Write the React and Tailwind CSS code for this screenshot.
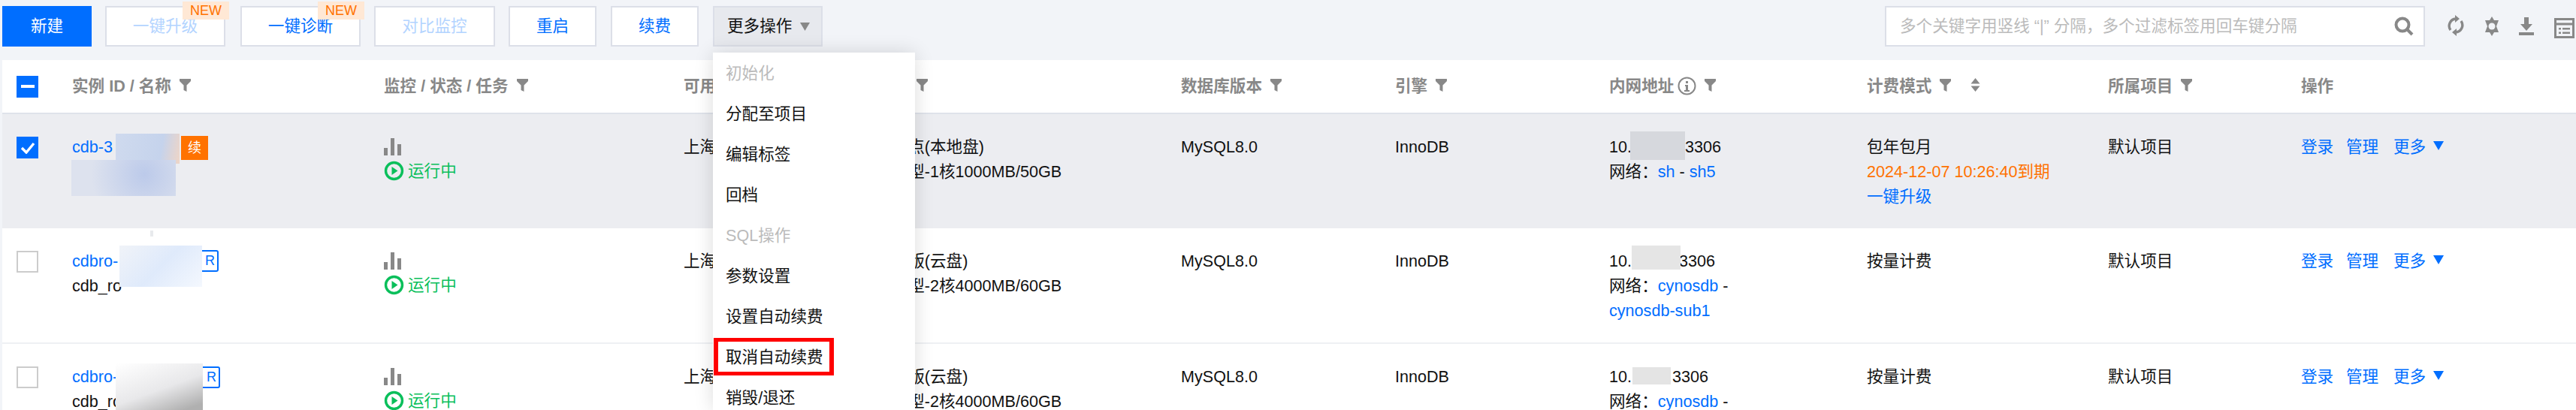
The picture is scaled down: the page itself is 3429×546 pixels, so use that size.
const GRID = "grid grid-cols-[93px_415px_399px_256px_406px_285px_285px_343px_321px_257px_1fr]";

function Filter() {
  return (
    <svg width="15" height="17" viewBox="0 0 15 17" className="ml-[11px] shrink-0 -translate-y-[1px]">
      <path d="M0 0h15v3L9.5 8.5V17l-4-2V8.5L0 3z" fill="#888" />
    </svg>
  );
}

function Head({ children, filter = true, after }) {
  return (
    <div className="flex items-center text-[21.6px] font-semibold text-[#888]">
      <span className="whitespace-nowrap">{children}</span>
      {after}
      {filter && <Filter />}
    </div>
  );
}

function Box({ checked, indeterminate }) {
  if (checked || indeterminate) {
    return (
      <div className="flex h-[29px] w-[29px] items-center justify-center bg-[#006eff]">
        {checked ? (
          <svg width="20" height="16" viewBox="0 0 20 16">
            <path d="M2 8l6 6L18 2" fill="none" stroke="#fff" strokeWidth="3.4" />
          </svg>
        ) : (
          <div className="h-[4px] w-[18px] bg-white" />
        )}
      </div>
    );
  }
  return <div className="h-[29px] w-[29px] border-2 border-[#ccc] bg-white" />;
}

function Bars() {
  return (
    <svg width="24" height="23" viewBox="0 0 24 23" className="block">
      <path d="M0 13h5v10H0zM9 0h5v23H9zM18 8h5v15h-5z" fill="#888" />
    </svg>
  );
}

function Running() {
  return (
    <div className="mt-[7px] flex h-[27px] items-center text-[21.6px] text-[#0abf5b]">
      <svg width="27" height="27" viewBox="0 0 27 27" className="mr-[5px] shrink-0">
        <circle cx="13.5" cy="13.5" r="11" fill="none" stroke="#0abf5b" strokeWidth="3.4" />
        <path d="M10.5 8l8 5.5-8 5.5z" fill="#0abf5b" />
      </svg>
      运行中
    </div>
  );
}

function Ops() {
  return (
    <div className="flex items-center text-[21.6px] leading-[33px] text-[#006eff]">
      <span className="w-[60px]">登录</span>
      <span className="w-[63px]">管理</span>
      <span>更多</span>
      <svg width="14" height="12" viewBox="0 0 14 12" className="ml-[10px] -translate-y-[2px]">
        <path d="M0 0h14L7 12z" fill="#006eff" />
      </svg>
    </div>
  );
}

function RTag({ className }) {
  return (
    <span className={"absolute flex items-center justify-end border-2 border-[#006eff] bg-white pr-[3px] text-[18px] text-[#006eff] rounded-[3px] " + className}>
      R
    </span>
  );
}

function Row({ selected, height, border, check, name, zone, config, net, bill, blur }) {
  return (
    <div className={GRID + " relative pt-[27px] text-[21.6px] leading-[33px] text-[#111] " + height + " " + (selected ? "bg-[#ecedf1] " : "bg-white ") + (border ? "border-b-2 border-[#eef0f4]" : "")}>
      <div className="pl-[19px] pt-[3px]"><Box checked={check} /></div>
      <div className="relative whitespace-nowrap">{name}{blur}</div>
      <div className="pt-[5px]">
        <Bars />
        <Running />
      </div>
      <div>{zone}</div>
      <div className="whitespace-nowrap">
        <div>{config[0]}</div>
        <div>{config[1]}</div>
      </div>
      <div>MySQL8.0</div>
      <div>InnoDB</div>
      <div className="relative">{net}</div>
      <div className="whitespace-nowrap">{bill}</div>
      <div>默认项目</div>
      <div><Ops /></div>
    </div>
  );
}

function Net({ gap, links, blurClass }) {
  return (
    <>
      <div className="flex">
        <span>10.</span>
        <span className={gap} />
        <span>3306</span>
      </div>
      <div className={"absolute " + blurClass} />
      <div className="w-[250px]">网络：{links}</div>
    </>
  );
}

const B = ({ children }) => <span className="whitespace-nowrap text-[#006eff]">{children}</span>;

function ToolButton({ children, width, faded, badge }) {
  return (
    <div className={"relative flex h-[54px] shrink-0 items-center justify-center border-2 border-[#dcdfe8] bg-white text-[21.6px] " + width + " " + (faded ? "text-[#b3d4ff]" : "text-[#006eff]")}>
      {children}
      {badge && (
        <span className="absolute right-[-7px] top-[-8px] flex h-[24px] w-[62px] items-center justify-center bg-[#ffe8d5] text-[18px] text-[#ff7200]">
          NEW
        </span>
      )}
    </div>
  );
}

const MENU = [
  ["初始化", true],
  ["分配至项目"],
  ["编辑标签"],
  ["回档"],
  ["SQL操作", true],
  ["参数设置"],
  ["设置自动续费"],
  ["取消自动续费"],
  ["销毁/退还"],
];

export default function App() {
  return (
    <div className="relative h-[546px] w-[3429px] overflow-hidden bg-[#f2f4f8] [font-family:'Liberation_Sans','Noto_Sans_CJK_SC',sans-serif]">
      {/* toolbar */}
      <div className="flex items-start pl-[3px] pr-[2px] pt-[8px]">
        <div className="flex h-[54px] w-[119px] shrink-0 items-center justify-center bg-[#006eff] text-[21.6px] text-white">新建</div>
        <div className="ml-[18px]"><ToolButton width="w-[160px]" faded badge>一键升级</ToolButton></div>
        <div className="ml-[20px]"><ToolButton width="w-[160px]" badge>一键诊断</ToolButton></div>
        <div className="ml-[18px]"><ToolButton width="w-[161px]" faded>对比监控</ToolButton></div>
        <div className="ml-[18px]"><ToolButton width="w-[117px]">重启</ToolButton></div>
        <div className="ml-[19px]"><ToolButton width="w-[117px]">续费</ToolButton></div>
        <div className="ml-[19px] flex h-[54px] w-[146px] shrink-0 items-center border-2 border-[#dcdfe8] bg-[#e7e9ee] pl-[17px] text-[21.6px] text-[#111]">
          更多操作
          <svg width="13" height="11" viewBox="0 0 13 11" className="ml-[11px]"><path d="M0 0h13L6.5 11z" fill="#888" /></svg>
        </div>
        <div className="ml-auto flex h-[54px] w-[719px] items-center justify-between border-2 border-[#dcdfe8] bg-white pl-[18px] pr-[13px] text-[21.6px] text-[#bbb]">
          <span className="whitespace-nowrap">多个关键字用竖线 “|” 分隔，多个过滤标签用回车键分隔</span>
          <svg width="26" height="26" viewBox="0 0 26 26">
            <circle cx="11" cy="11" r="8.5" fill="none" stroke="#888" strokeWidth="4" />
            <path d="M17 17l7 7" stroke="#888" strokeWidth="4" />
          </svg>
        </div>
        <svg width="22" height="28" viewBox="0 0 22 28" className="ml-[30px] mt-[12px]">
          <path d="M4 20A9.5 9.5 0 0 1 11 5" fill="none" stroke="#888" strokeWidth="3.4" />
          <path d="M18 8a9.5 9.5 0 0 1-7 15" fill="none" stroke="#888" strokeWidth="3.4" />
          <path d="M10 0l6 5-6 5zM12 18l-6 5 6 5z" fill="#888" />
        </svg>
        <svg width="24" height="26" viewBox="0 0 24 26" className="ml-[25px] mt-[14px]">
          <path d="M12 0l3 5h6l-3 8 3 8h-6l-3 5-3-5H3l3-8-3-8h6z" fill="#888" />
          <circle cx="12" cy="13" r="4.5" fill="#f2f4f8" />
        </svg>
        <svg width="22" height="24" viewBox="0 0 22 24" className="ml-[23px] mt-[15px]">
          <path d="M8 0h6v9h5l-8 9-8-9h5zM1 20h20v4H1z" fill="#888" />
        </svg>
        <svg width="27" height="27" viewBox="0 0 27 27" className="ml-[26px] mt-[16px]">
          <path d="M1.5 1.5h24v24h-24z" fill="none" stroke="#888" strokeWidth="3" />
          <path d="M1.5 8h24" stroke="#888" strokeWidth="3" />
          <path d="M6 13h3v2.5H6zM11 13h10v2.5H11zM6 18.500h3V21H6zM11 18.500h10V21H11z" fill="#888" />
        </svg>
      </div>

      {/* table */}
      <div className="ml-[3px] mt-[18px]">
        <div className={GRID + " h-[72px] items-center border-b-2 border-[#dfe3ea] bg-white"}>
          <div className="pl-[19px]"><Box indeterminate /></div>
          <Head>实例 ID / 名称</Head>
          <Head>监控 / 状态 / 任务</Head>
          <Head>可用区</Head>
          <Head>配置</Head>
          <Head>数据库版本</Head>
          <Head>引擎</Head>
          <Head
            after={
              <svg width="25" height="25" viewBox="0 0 25 25" className="ml-[5px] shrink-0">
                <circle cx="12.500" cy="12.500" r="11" fill="none" stroke="#888" strokeWidth="2" />
                <path d="M11 6h3v3h-3zM10 11h4v7h2v2H9v-2h2v-5h-1z" fill="#888" />
              </svg>
            }
          >内网地址</Head>
          <Head filter={false}>
            <span className="flex items-center">
              计费模式
              <Filter />
              <svg width="15" height="18" viewBox="0 0 15 18" className="ml-[25px] -translate-y-[2px]">
                <path d="M7.500 0l6 7.500h-12zM7.500 18l-6-7.500h12z" fill="#888" />
              </svg>
            </span>
          </Head>
          <Head>所属项目</Head>
          <Head filter={false}>操作</Head>
        </div>

        <Row
          selected
          height="h-[152px]"
          check
          zone="上海四区"
          config={["两节点(本地盘)", "通用型-1核1000MB/50GB"]}
          name={
            <>
              <div className="text-[#006eff]">cdb-3</div>
              <div>cdb_x</div>
            </>
          }
          blur={
            <>
              <div className="absolute left-[58px] top-[-1px] h-[40px] w-[85px] bg-[linear-gradient(100deg,#cfdaee,#c5d3ec_70%,#efd5c6)]" />
              <div className="absolute left-[145px] top-[2px] flex h-[32px] w-[36px] items-center justify-center bg-[#ff7200] text-[18px] leading-none text-white">续</div>
              <div className="absolute left-[-1px] top-[34px] h-[48px] w-[139px] bg-[radial-gradient(circle_at_70%_40%,#bccaea,#dde2ee_70%)]" />
            </>
          }
          net={
            <Net
              gap="w-[71px]"
              blurClass="left-[28px] top-[-4px] h-[38px] w-[73px] bg-[#d6d8dd]"
              links={<><B>sh</B> - <B>sh5</B></>}
            />
          }
          bill={
            <>
              <div>包年包月</div>
              <div className="text-[#ff7200]">2024-12-07 10:26:40到期</div>
              <div className="text-[#006eff]">一键升级</div>
            </>
          }
        />

        <Row
          height="h-[154px]"
          border
          zone="上海五区"
          config={["基础版(云盘)", "通用型-2核4000MB/60GB"]}
          name={
            <>
              <div className="text-[#006eff]">cdbro-</div>
              <div>cdb_ro</div>
            </>
          }
          blur={
            <>
              <div className="absolute left-[104px] top-[-24px] h-[8px] w-[4px] bg-[#e8eaed]" />
              <RTag className="left-[168px] top-[2px] h-[29px] w-[27px]" />
              <div className="absolute left-[63px] top-[-4px] h-[55px] w-[110px] bg-[linear-gradient(135deg,#f0f3f8,#dfeafb_50%,#f4f8fe)]" />
            </>
          }
          net={
            <Net
              gap="w-[63px]"
              blurClass="left-[30px] top-[-4px] h-[32px] w-[65px] bg-[#e5e5e5]"
              links={<><B>cynosdb</B> - <B>cynosdb-sub1</B></>}
            />
          }
          bill={<div>按量计费</div>}
        />

        <Row
          height="h-[154px]"
          zone="上海五区"
          config={["基础版(云盘)", "通用型-2核4000MB/60GB"]}
          name={
            <>
              <div className="text-[#006eff]">cdbro-</div>
              <div>cdb_ro</div>
            </>
          }
          blur={
            <>
              <RTag className="left-[170px] top-[3px] h-[29px] w-[27px]" />
              <div className="absolute left-[58px] top-[-1px] h-[70px] w-[116px] bg-[linear-gradient(160deg,#fff,#e8e8ea_50%,#b0b0b0_85%)]" />
            </>
          }
          net={
            <Net
              gap="w-[54px]"
              blurClass="left-[31px] top-[4px] h-[23px] w-[51px] bg-[#e4e4e4]"
              links={<><B>cynosdb</B> - <B>cynosdb-sub1</B></>}
            />
          }
          bill={<div>按量计费</div>}
        />
      </div>

      {/* dropdown menu */}
      <div className="absolute bottom-0 left-[949px] top-[70px] w-[269px] bg-white pt-px text-[21.6px] shadow-[0_0_24px_rgba(0,0,0,0.14)]">
        {MENU.map(([label, off]) => (
          <div key={label} className={"flex h-[54px] items-center pl-[17px] " + (off ? "text-[#bbb]" : "text-[#111]")}>
            {label}
          </div>
        ))}
        <div className="absolute left-[1px] top-[380px] h-[50px] w-[160px] border-x-[6px] border-y-[5px] border-[#f00]" />
      </div>
    </div>
  );
}
